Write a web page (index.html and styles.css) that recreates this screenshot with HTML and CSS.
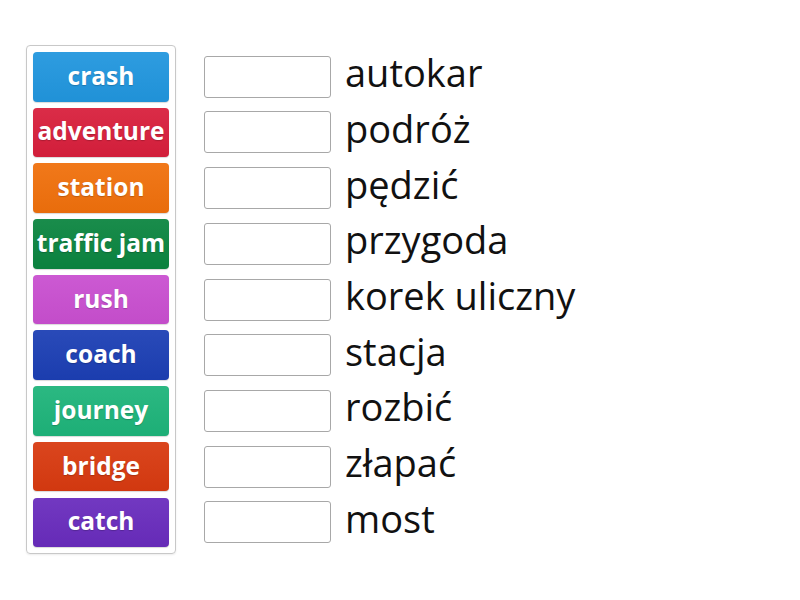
FILE: index.html
```html
<!DOCTYPE html>
<html lang="pl">
<head>
<meta charset="utf-8">
<title>Match up</title>
<link rel="stylesheet" href="styles.css">
</head>
<body>
<div class="game">
  <div class="bank">
    <div class="tile c-blue">crash</div>
    <div class="tile c-red">adventure</div>
    <div class="tile c-orange">station</div>
    <div class="tile c-green">traffic jam</div>
    <div class="tile c-pink">rush</div>
    <div class="tile c-navy">coach</div>
    <div class="tile c-teal">journey</div>
    <div class="tile c-rust">bridge</div>
    <div class="tile c-purple">catch</div>
  </div>
  <div class="targets">
    <div class="row"><div class="slot"></div><span class="word">autokar</span></div>
    <div class="row"><div class="slot"></div><span class="word">podróż</span></div>
    <div class="row"><div class="slot"></div><span class="word">pędzić</span></div>
    <div class="row"><div class="slot"></div><span class="word">przygoda</span></div>
    <div class="row"><div class="slot"></div><span class="word">korek uliczny</span></div>
    <div class="row"><div class="slot"></div><span class="word">stacja</span></div>
    <div class="row"><div class="slot"></div><span class="word">rozbić</span></div>
    <div class="row"><div class="slot"></div><span class="word">złapać</span></div>
    <div class="row"><div class="slot"></div><span class="word">most</span></div>
  </div>
</div>
</body>
</html>
```

FILE: styles.css
```css
html, body {
  margin: 0;
  padding: 0;
  background: #ffffff;
}

body {
  font-family: "Open Sans", "Liberation Sans", sans-serif;
  width: 800px;
  height: 600px;
  overflow: hidden;
}

.game {
  display: flex;
  align-items: flex-start;
  padding: 45px 0 0 26px;
  gap: 28px;
}

.bank {
  width: 136px;
  padding: 6px;
  border: 1px solid #c8c8c8;
  border-radius: 4px;
  display: grid;
  grid-template-rows: repeat(9, 49.6px);
  row-gap: 6.1px;
  box-shadow: 0 1px 2px rgba(0, 0, 0, 0.08);
}

.tile {
  display: flex;
  align-items: center;
  justify-content: center;
  padding-bottom: 3px;
  box-sizing: border-box;
  border-radius: 4px;
  color: #ffffff;
  font-weight: 700;
  font-size: 24.5px;
  white-space: nowrap;
  text-shadow: 0 1px 1px rgba(0, 0, 0, 0.2);
  box-shadow: 0 1px 1px rgba(0, 0, 0, 0.15);
  background-image: linear-gradient(to bottom, rgba(255, 255, 255, 0.06), rgba(0, 0, 0, 0.03));
}

.c-blue   { background-color: #2196de; }
.c-red    { background-color: #d81f3c; }
.c-orange { background-color: #f0700c; }
.c-green  { background-color: #0b8540; }
.c-pink   { background-color: #c94fd0; }
.c-navy   { background-color: #1c3fb4; }
.c-teal   { background-color: #1eb47a; }
.c-rust   { background-color: #d83a10; }
.c-purple { background-color: #692cbd; }

.targets {
  padding-top: 7px;
  display: grid;
  grid-template-rows: repeat(9, 49.6px);
  row-gap: 6.1px;
}

.row {
  display: flex;
  align-items: center;
  gap: 14px;
}

.slot {
  width: 125px;
  height: 40px;
  border: 1px solid #a8a8a8;
  border-radius: 3px;
  background: #ffffff;
  flex: none;
}

.word {
  font-size: 38px;
  color: #111111;
  line-height: 1;
  white-space: nowrap;
  padding-bottom: 9px;
}
```
